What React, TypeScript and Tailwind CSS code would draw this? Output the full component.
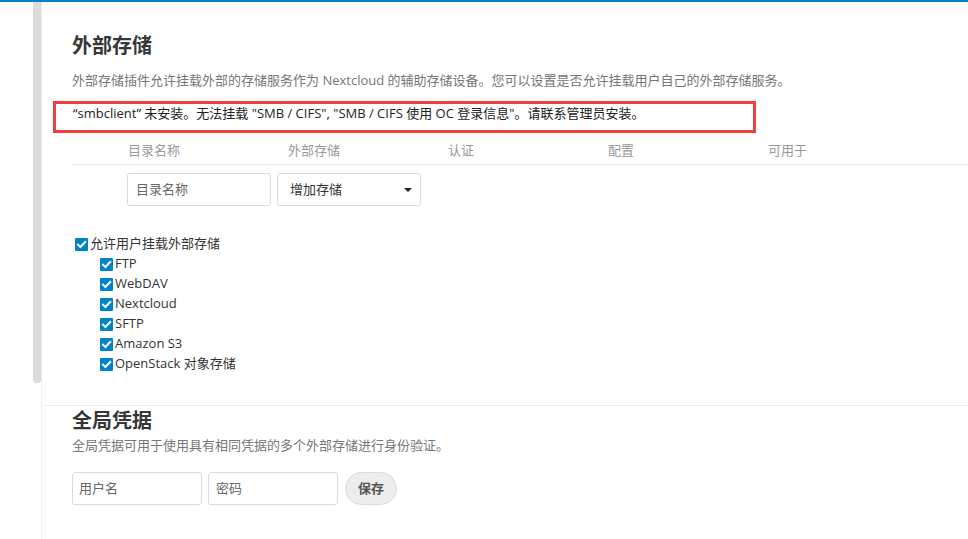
const font = { fontFamily: '"Open Sans", "Noto Sans CJK SC", sans-serif' };

function Check() {
  return (
    <span className="inline-flex h-[13px] w-[13px] shrink-0 items-center justify-center rounded-[1px] bg-[#0082c9]">
      <svg viewBox="0 0 13 13" className="h-[13px] w-[13px]">
        <path d="M3 6.6 L5.4 9 L10.2 4" fill="none" stroke="white" strokeWidth="2" strokeLinecap="square" />
      </svg>
    </span>
  );
}

const backends = ['FTP', 'WebDAV', 'Nextcloud', 'SFTP', 'Amazon S3', 'OpenStack 对象存储'];
const columns = ['目录名称', '外部存储', '认证', '配置', '可用于'];

export default function App() {
  return (
    <div className="h-[539px] w-full overflow-hidden border-t-2 border-[#0082c9] bg-white" style={font}>
      <div className="flex h-full">
        <div className="w-[33px] shrink-0" />
        <div className="w-[8px] shrink-0">
          <div className="h-[381px] rounded-b-[3px] bg-[#dcdcdc]" />
        </div>
        <div className="flex-1 border-l border-[#ededed]">
          <section className="pl-[30px] pt-[29px]">
            <h2 className="text-[20px] font-bold leading-[30px] text-[#363636]">外部存储</h2>
            <p className="mt-[9px] text-[13px] leading-[20px] text-[#767676]">
              外部存储插件允许挂载外部的存储服务作为 Nextcloud 的辅助存储设备。您可以设置是否允许挂载用户自己的外部存储服务。
            </p>
            <div className="ml-[-19px] mt-[11px] h-[32px] w-[703px] border-[3px] border-[#f23b3b] pl-[17px] text-[13px] leading-[20px] text-[#222]">
              <div className="mt-[-1px]">
                “smbclient” 未安装。无法挂载 "SMB / CIFS", "SMB / CIFS 使用 OC 登录信息"。请联系管理员安装。
              </div>
            </div>
            <div className="mt-[5px] flex h-[27px] items-center border-b border-[#ebebeb] pl-[56px] text-[13px] text-[#9a9a9a]">
              {columns.map((c) => (
                <div key={c} className="w-[160px] shrink-0">{c}</div>
              ))}
            </div>
            <div className="mt-[8px] flex gap-[6px] pl-[55px]">
              <div className="flex h-[33px] w-[144px] items-center rounded-[3px] border border-[#dbdbdb] px-[8px] text-[13px] text-[#666]">
                目录名称
              </div>
              <div className="flex h-[33px] w-[144px] items-center justify-between rounded-[3px] border border-[#dbdbdb] pl-[12px] pr-[8px] text-[13px] text-[#333]">
                <span>增加存储</span>
                <span className="h-0 w-0 border-x-[4px] border-t-[4px] border-x-transparent border-t-[#222]" />
              </div>
            </div>
            <div className="mt-[28px] pl-[3px] text-[13px] text-[#333]">
              <div className="flex h-[20px] items-center gap-[2px]">
                <Check />
                <span>允许用户挂载外部存储</span>
              </div>
              <div className="pl-[25px]">
                {backends.map((b) => (
                  <div key={b} className="flex h-[20px] items-center gap-[2px]">
                    <Check />
                    <span>{b}</span>
                  </div>
                ))}
              </div>
            </div>
          </section>
          <div className="mt-[31px] border-t border-[#ededed]" />
          <section className="pl-[30px]">
            <h2 className="text-[20px] font-bold leading-[30px] text-[#363636]">全局凭据</h2>
            <p className="mt-[-1px] text-[13px] leading-[20px] text-[#767676]">
              全局凭据可用于使用具有相同凭据的多个外部存储进行身份验证。
            </p>
            <div className="mt-[17px] flex items-center gap-[6px]">
              <div className="flex h-[33px] w-[130px] items-center rounded-[3px] border border-[#dbdbdb] px-[6px] text-[13px] text-[#666]">
                用户名
              </div>
              <div className="flex h-[33px] w-[130px] items-center rounded-[3px] border border-[#dbdbdb] px-[7px] text-[13px] text-[#666]">
                密码
              </div>
              <button className="ml-[1px] flex h-[33px] w-[52px] items-center justify-center rounded-full border border-[#dbdbdb] bg-[#ededed] text-[13px] font-bold text-[#555]">
                保存
              </button>
            </div>
          </section>
        </div>
      </div>
    </div>
  );
}
